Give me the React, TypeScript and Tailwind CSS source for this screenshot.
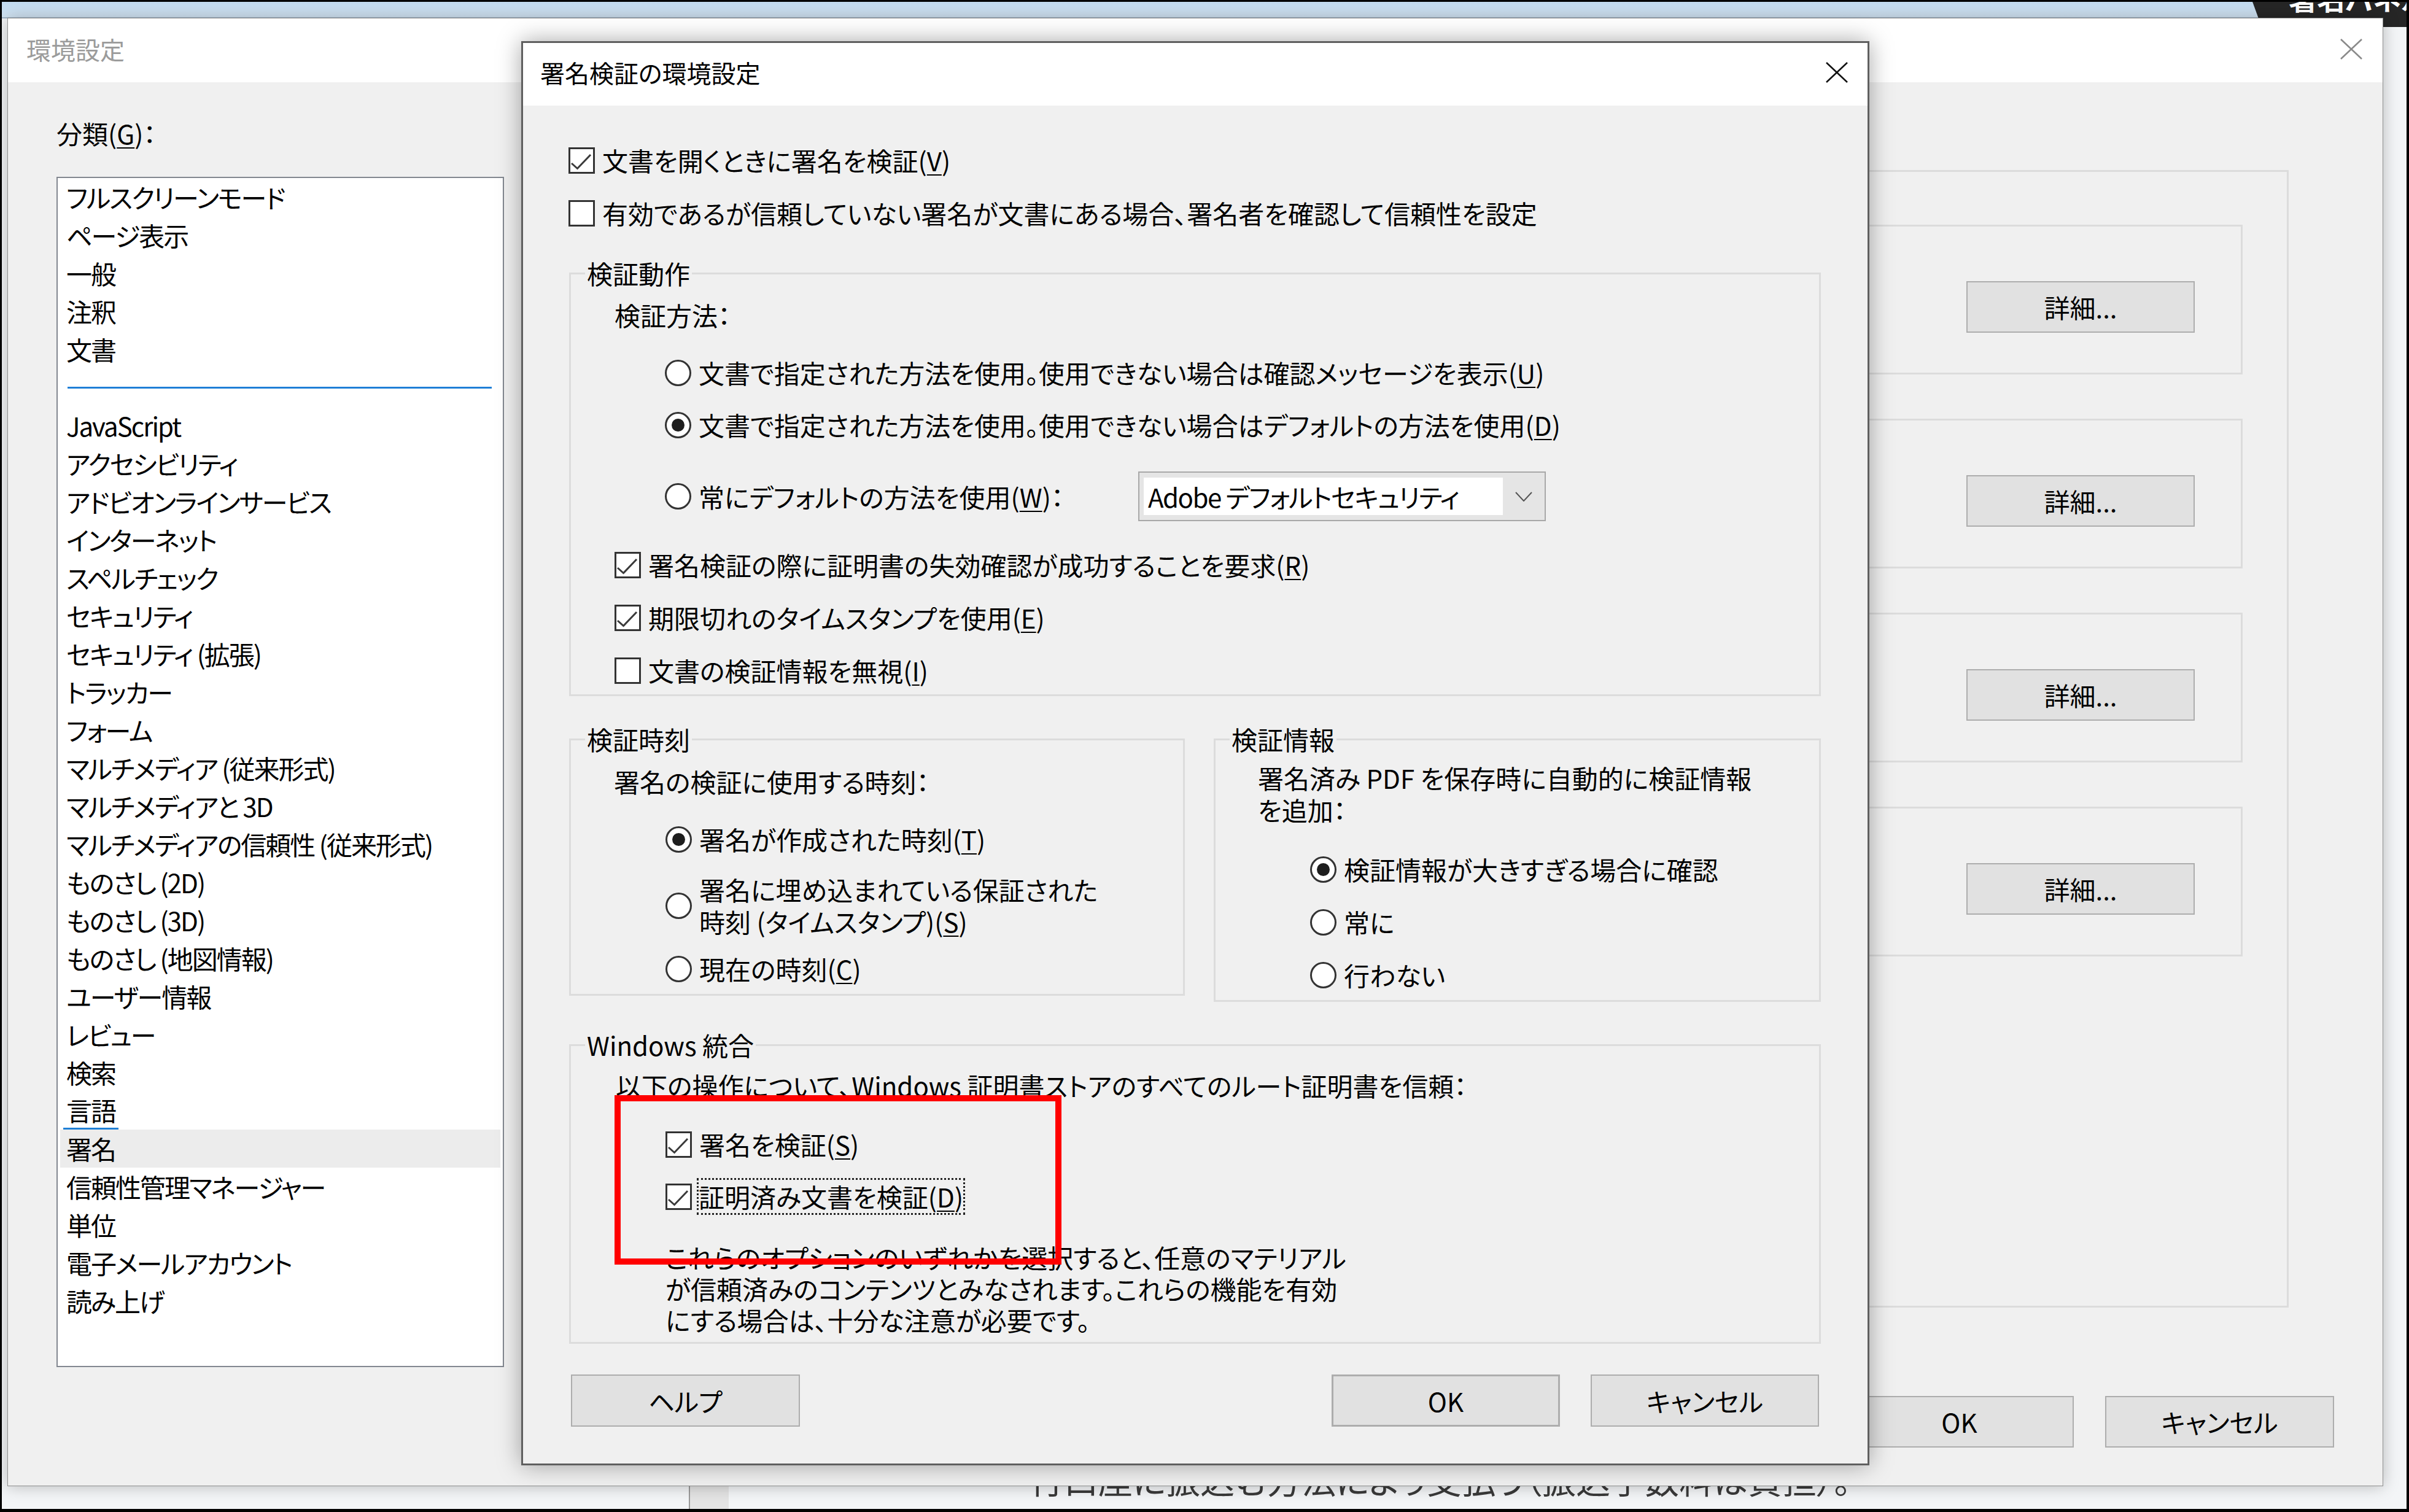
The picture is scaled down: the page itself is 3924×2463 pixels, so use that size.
import React from "react";

type Kids = { children?: React.ReactNode; className?: string };

const categoriesTop = ["フルスクリーンモード", "ページ表示", "一般", "注釈", "文書"];

const categories = [
  "JavaScript",
  "アクセシビリティ",
  "アドビオンラインサービス",
  "インターネット",
  "スペルチェック",
  "セキュリティ",
  "セキュリティ (拡張)",
  "トラッカー",
  "フォーム",
  "マルチメディア (従来形式)",
  "マルチメディアと 3D",
  "マルチメディアの信頼性 (従来形式)",
  "ものさし (2D)",
  "ものさし (3D)",
  "ものさし (地図情報)",
  "ユーザー情報",
  "レビュー",
  "検索",
  "言語",
  "署名",
  "信頼性管理マネージャー",
  "単位",
  "電子メールアカウント",
  "読み上げ",
];

const U = ({ children }: Kids) => (
  <span className="underline decoration-[2px] underline-offset-[5px]">{children}</span>
);

const Check = ({ checked }: { checked?: boolean }) => (
  <span className="flex h-[43px] w-[43px] shrink-0 items-center justify-center border-[3px] border-[#333333] bg-white">
    {checked && (
      <svg width="37" height="37" viewBox="0 0 37 37">
        <polyline points="2,23 11.5,31.5 33,9" fill="none" stroke="#3a3a3a" strokeWidth="3" />
      </svg>
    )}
  </span>
);

const Radio = ({ checked }: { checked?: boolean }) => (
  <span className="flex h-[43px] w-[43px] shrink-0 items-center justify-center rounded-full border-[3px] border-[#333333] bg-white">
    {checked && <span className="h-[21px] w-[21px] rounded-full bg-[#1e1e1e]" />}
  </span>
);

const CheckRow = ({ checked, children, className }: Kids & { checked?: boolean }) => (
  <div className={"flex h-[62px] items-center " + (className ?? "")}>
    <Check checked={checked} />
    <span className="ml-[12px] whitespace-nowrap">{children}</span>
  </div>
);

const RadioRow = ({ checked, children, className }: Kids & { checked?: boolean }) => (
  <div className={"flex h-[62px] items-center " + (className ?? "")}>
    <Radio checked={checked} />
    <span className="ml-[12px] whitespace-nowrap">{children}</span>
  </div>
);

const Group = ({ title, children, className }: Kids & { title: string }) => (
  <fieldset className={"border-[3px] border-[#dcdcdc] " + (className ?? "")}>
    <legend className="ml-[23px] px-[3px] leading-[50px]">{title}</legend>
    {children}
  </fieldset>
);

const Button = ({ children, className }: Kids) => (
  <div
    className={
      "flex items-center justify-center border-[2px] border-[#adadad] bg-[#e1e1e1] " + (className ?? "")
    }
  >
    {children}
  </div>
);

const CloseX = ({ color }: { color: string }) => (
  <svg width="38" height="34" viewBox="0 0 38 34">
    <line x1="2" y1="1" x2="36" y2="33" stroke={color} strokeWidth="2.5" />
    <line x1="36" y1="1" x2="2" y2="33" stroke={color} strokeWidth="2.5" />
  </svg>
);

function PreferencesWindow() {
  return (
    <div className="absolute left-[12px] top-[29px] flex h-[2392px] w-[3870px] flex-col border border-[#8e8e8e] bg-white shadow-[0_0_24px_rgba(0,0,0,0.25)]">
      <div className="flex h-[104px] items-center justify-between bg-white pb-[4px] pl-[30px] pr-[32px]">
        <span className="text-[40px] text-[#9b9b9b]">環境設定</span>
        <CloseX color="#8a8a8a" />
      </div>
      <div className="flex h-[2286px] flex-col bg-[#f0f0f0]">
        <div className="flex h-[2093px]">
          <div className="ml-[79px] flex w-[729px] flex-col">
            <div className="mt-[58px] flex h-[50px] items-center">
              分類(<U>G</U>)：
            </div>
            <div className="mt-[46px] h-[1939px] border-[2px] border-[#828790] bg-white tracking-[-2px]">
              {categoriesTop.map((c) => (
                <div key={c} className="h-[62px] pl-[14px] leading-[62px]">
                  {c}
                </div>
              ))}
              <div className="flex h-[62px] items-center pl-[16px] pr-[18px]">
                <div className="h-[3px] w-full bg-[#1f7fd6]" />
              </div>
              {categories.map((c) =>
                c === "署名" ? (
                  <div key={c} className="mx-[4px] h-[62px] bg-[#ececec] pl-[10px] leading-[62px]">
                    {c}
                  </div>
                ) : c === "言語" ? (
                  <div key={c} className="flex h-[62px] items-end pl-[9px]">
                    <span className="h-[62px] border-b-[3px] border-[#1f7fd6] px-[5px] leading-[60px]">{c}</span>
                  </div>
                ) : (
                  <div key={c} className="h-[62px] whitespace-nowrap pl-[14px] leading-[62px]">
                    {c}
                  </div>
                )
              )}
            </div>
          </div>
          <div className="ml-[79px] mt-[143px] flex h-[1853px] w-[2828px] flex-col gap-[72px] border-[3px] border-[#dcdcdc] pt-[86px]">
            {[0, 1, 2, 3].map((i) => (
              <div
                key={i}
                className="ml-[150px] mr-[72px] flex h-[244px] items-start justify-end border-[3px] border-[#dcdcdc] pr-[75px] pt-[89px]"
              >
                <Button className="h-[84px] w-[372px]">詳細...</Button>
              </div>
            ))}
          </div>
        </div>
        <div className="mt-[47px] flex justify-end gap-[51px] pr-[79px]">
          <Button className="h-[84px] w-[373px]">OK</Button>
          <Button className="h-[84px] w-[373px]">キャンセル</Button>
        </div>
      </div>
    </div>
  );
}

function SignatureDialog() {
  return (
    <div className="absolute left-[849px] top-[67px] flex h-[2320px] w-[2196px] flex-col border-[3px] border-[#5f5f5f] bg-white shadow-[0_0_36px_rgba(0,0,0,0.35)]">
      <div className="flex h-[102px] shrink-0 items-center justify-between bg-white pb-[6px] pl-[28px] pr-[31px]">
        <span className="text-[40px]">署名検証の環境設定</span>
        <CloseX color="#111111" />
      </div>
      <div className="flex h-[2212px] flex-col bg-[#f0f0f0] pl-[74px]">
        <CheckRow checked className="mt-[58px]">
          文書を開くときに署名を検証(<U>V</U>)
        </CheckRow>
        <CheckRow className="mt-[24px]">
          有効であるが信頼していない署名が文書にある場合、署名者を確認して信頼性を設定
        </CheckRow>

        <Group title="検証動作" className="ml-[1px] mt-[42px] h-[714px] w-[2039px]">
          <div className="ml-[71px] mt-[18px] flex h-[50px] items-center">検証方法：</div>
          <RadioRow className="ml-[153px] mt-[38px]">
            文書で指定された方法を使用。使用できない場合は確認メッセージを表示(<U>U</U>)
          </RadioRow>
          <RadioRow checked className="ml-[153px] mt-[23px]">
            文書で指定された方法を使用。使用できない場合はデフォルトの方法を使用(<U>D</U>)
          </RadioRow>
          <div className="ml-[153px] mt-[45px] flex h-[81px] items-center">
            <div className="flex w-[771px] items-center">
              <Radio />
              <span className="ml-[12px] whitespace-nowrap">
                常にデフォルトの方法を使用(<U>W</U>)：
              </span>
            </div>
            <div className="flex h-[81px] w-[664px] border-[2px] border-[#a8a8a8] bg-[#e5e5e5] py-[8px] pl-[7px]">
              <div className="flex flex-1 items-center whitespace-nowrap bg-white pl-[7px] tracking-[-1.5px]">
                Adobe デフォルトセキュリティ
              </div>
              <div className="flex w-[68px] items-center justify-center">
                <svg width="28" height="16" viewBox="0 0 28 16">
                  <polyline points="1,1 14,15 27,1" fill="none" stroke="#555555" strokeWidth="2" />
                </svg>
              </div>
            </div>
          </div>
          <CheckRow checked className="ml-[71px] mt-[40px]">
            署名検証の際に証明書の失効確認が成功することを要求(<U>R</U>)
          </CheckRow>
          <CheckRow checked className="ml-[71px] mt-[24px]">
            期限切れのタイムスタンプを使用(<U>E</U>)
          </CheckRow>
          <CheckRow className="ml-[71px] mt-[24px]">
            文書の検証情報を無視(<U>I</U>)
          </CheckRow>
        </Group>

        <div className="ml-[1px] mt-[45px] flex items-start gap-[47px]">
          <Group title="検証時刻" className="h-[443px] w-[1003px]">
            <div className="ml-[70px] mt-[19px] flex h-[50px] items-center">署名の検証に使用する時刻：</div>
            <RadioRow checked className="ml-[154px] mt-[38px]">
              署名が作成された時刻(<U>T</U>)
            </RadioRow>
            <div className="ml-[154px] mt-[25px] flex items-center">
              <Radio />
              <span className="ml-[12px] whitespace-nowrap leading-[52px]">
                署名に埋め込まれている保証された
                <br />
                時刻 (タイムスタンプ)(<U>S</U>)
              </span>
            </div>
            <RadioRow className="ml-[154px] mt-[20px]">
              現在の時刻(<U>C</U>)
            </RadioRow>
          </Group>
          <Group title="検証情報" className="h-[453px] w-[989px]">
            <div className="ml-[69px] mt-[12px] whitespace-nowrap leading-[52px]">
              署名済み PDF を保存時に自動的に検証情報
              <br />
              を追加：
            </div>
            <RadioRow checked className="ml-[154px] mt-[40px]">
              検証情報が大きすぎる場合に確認
            </RadioRow>
            <RadioRow className="ml-[154px] mt-[24px]">常に</RadioRow>
            <RadioRow className="ml-[154px] mt-[24px]">行わない</RadioRow>
          </Group>
        </div>

        <Group title="Windows 統合" className="ml-[1px] mt-[45px] h-[512px] w-[2039px]">
          <div className="ml-[73px] mt-[16px] flex h-[50px] items-center whitespace-nowrap">
            以下の操作について、Windows 証明書ストアのすべてのルート証明書を信頼：
          </div>
          <CheckRow checked className="ml-[154px] mt-[40px]">
            署名を検証(<U>S</U>)
          </CheckRow>
          <div className="ml-[154px] mt-[23px] flex h-[62px] items-center">
            <Check checked />
            <span className="ml-[8px] whitespace-nowrap border-[3px] border-dotted border-[#222222] leading-[54px]">
              証明済み文書を検証(<U>D</U>)
            </span>
          </div>
          <div className="ml-[154px] mt-[42px] whitespace-nowrap leading-[51px]">
            これらのオプションのいずれかを選択すると、任意のマテリアル
            <br />
            が信頼済みのコンテンツとみなされます。これらの機能を有効
            <br />
            にする場合は、十分な注意が必要です。
          </div>
        </Group>

        <div className="ml-[4px] mt-[50px] flex w-[2033px]">
          <Button className="h-[85px] w-[373px]">ヘルプ</Button>
          <Button className="ml-auto h-[85px] w-[372px] border-[3px] border-[#0078d7]">OK</Button>
          <Button className="ml-[50px] h-[85px] w-[372px]">キャンセル</Button>
        </div>
      </div>

      <div className="pointer-events-none absolute left-[149px] top-[1714px] h-[276px] w-[728px] border-[10px] border-[#ff0000]" />
    </div>
  );
}

export default function App() {
  return (
    <div className="relative h-[2463px] w-[3924px] overflow-hidden bg-[#f3f5f7] font-['Noto_Sans_CJK_JP','Noto_Sans',sans-serif] text-[42px] leading-none text-black [font-feature-settings:'palt']">
      <div className="absolute left-0 top-0 h-[30px] w-full border-b-[2px] border-[#9fb3c6] bg-gradient-to-b from-[#c0d9ef] to-[#d2e4f3]" />
      <div className="absolute left-[3668px] top-0 h-[44px] w-[256px] overflow-hidden bg-[#262626] [clip-path:polygon(0_0,100%_0,100%_100%,16px_100%)]">
        <span className="absolute left-[60px] top-[-27px] whitespace-nowrap text-[46px] font-bold leading-[46px] text-white">
          署名パネル
        </span>
      </div>
      <div className="absolute left-[1122px] top-[2400px] h-[60px] w-[65px] border-l-[2px] border-[#9a9a9a] bg-[#e4e4e4]" />
      <div className="absolute left-[1677px] top-[2381px] whitespace-nowrap text-[56px] leading-[56px] text-[#3a3a3a]">
        行口座に振込む方法により支払う（振込手数料は負担）。
      </div>

      <PreferencesWindow />
      <SignatureDialog />

      <div className="pointer-events-none absolute inset-0 border-b-[5px] border-l-[3px] border-r-[4px] border-t-[3px] border-black" />
    </div>
  );
}
